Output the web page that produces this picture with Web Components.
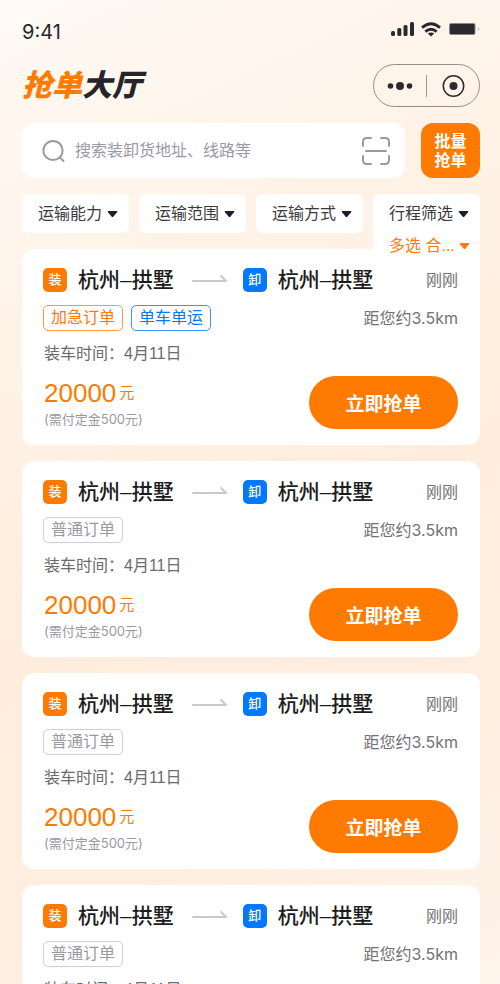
<!DOCTYPE html>
<html lang="zh-CN">
<head>
<meta charset="utf-8">
<meta name="viewport" content="width=device-width, initial-scale=1">
<title>抢单大厅</title>
<style>
  html { min-height: 100%; background: linear-gradient(155deg, #fffaf5 0%, #fff4ea 20%, #feeddd 50%, #feeee0 72%, #fff6ee 100%); }
  body { margin: 0; font-family: "Liberation Sans", "Noto Sans CJK SC", sans-serif; color: #26262a; --wide: Inter, "Noto Sans CJK SC", sans-serif; }
</style>
</head>
<body>
<hall-page></hall-page>

<script>
const define = (name, html, setup) => {
  const template = document.createElement('template');
  template.innerHTML = html;
  customElements.define(name, class extends HTMLElement {
    constructor() {
      super();
      this.attachShadow({ mode: 'open' }).append(template.content.cloneNode(true));
    }
    connectedCallback() { if (setup) setup(this, this.shadowRoot); }
  });
};

define('status-bar', `
  <style>
    :host { display: flex; align-items: center; justify-content: space-between; height: 24px; font-family: var(--wide); font-size: 20px; line-height: 24px; }
    svg { display: block; overflow: visible; }
  </style>
  <time>9:41</time>
  <svg width="90" height="18" viewBox="0 0 90 18" fill="#2a2a2e" aria-label="信号与电量">
    <rect x="1" y="8" width="4" height="5" rx="1.5"/>
    <rect x="7.300" y="5" width="4" height="8" rx="1.5"/>
    <rect x="13.500" y="2" width="4" height="11" rx="1.500"/>
    <rect x="20" y="-1" width="4" height="14" rx="1.500"/>
    <g fill="none" stroke="#2a2a2e" stroke-width="2.800">
      <path d="M32 4.600Q41 -3.200 50 4.600"/>
      <path d="M35.300 8.600Q41 3.800 46.700 8.600"/>
    </g>
    <path d="M37.800 10.600Q41 8.600 44.200 10.600L41 13.500Z"/>
    <rect x="59" y="0" width="26.500" height="12" rx="2" fill="#8f8885"/>
    <rect x="60" y="1" width="24.500" height="10" rx="1"/>
    <path d="M88 4Q90.500 6 88 8Z" fill="#bcb2ac"/>
  </svg>
`);

define('hall-header', `
  <style>
    :host { display: flex; align-items: center; justify-content: space-between; }
    h1 { margin: 0; font-size: 30px; line-height: 42px; font-weight: 900; font-style: italic; color: #26262a; }
    h1 span { color: #ff7a00; }
    .capsule { display: flex; align-items: center; width: 107px; height: 43px; box-sizing: border-box; border: 1px solid #978d88; border-radius: 22px; }
    button { flex: 1; display: grid; place-items: center; height: 100%; padding: 0; border: 0; background: none; }
    i { width: 1px; height: 22px; background: #9f9692; }
    svg { display: block; }
  </style>
  <h1><span>抢单</span>大厅</h1>
  <div class="capsule">
    <button aria-label="更多"><svg width="26" height="10" fill="#2a2a2e"><circle cx="3.500" cy="5" r="2.800"/><circle cx="13" cy="5" r="4"/><circle cx="22.500" cy="5" r="2.800"/></svg></button>
    <i></i>
    <button aria-label="关闭"><svg width="24" height="24"><circle cx="12.500" cy="12" r="10.200" fill="none" stroke="#2a2a2e" stroke-width="1.500"/><circle cx="12.500" cy="12" r="4" fill="#2a2a2e"/></svg></button>
  </div>
`);

define('search-row', `
  <style>
    :host { display: flex; gap: 16px; height: 55px; }
    .box { flex: 1; min-width: 0; display: flex; align-items: center; gap: 10px; padding: 0 14px 0 20px; background: #fff; border-radius: 12px; }
    label { display: flex; }
    input { flex: 1; min-width: 0; padding: 0; border: 0; outline: 0; background: none; font: inherit; font-size: 16px; line-height: 24px; color: #333; }
    input::placeholder { color: #9a9aa4; opacity: 1; }
    .scan { display: grid; padding: 0; border: 0; background: none; }
    .batch { width: 59px; padding: 0 13px; border: 0; border-radius: 12px; background: #ff7a00; color: #fff; font: inherit; font-size: 16px; line-height: 19px; font-weight: 700; }
    svg { display: block; fill: none; stroke: #9a9aa6; stroke-width: 2; stroke-linecap: round; }
  </style>
  <div class="box">
    <label for="q" aria-label="搜索"><svg width="23" height="24"><circle cx="11" cy="11.500" r="9.600"/><path d="M18 18.500L21.500 22"/></svg></label>
    <input id="q" type="text" placeholder="搜索装卸货地址、线路等">
    <button class="scan" aria-label="扫一扫"><svg width="30" height="30"><path d="M2 10V6Q2 2 6 2H10M20 2H24Q28 2 28 6V10M28 20V24Q28 28 24 28H20M10 28H6Q2 28 2 24V20M5 15H25"/></svg></button>
  </div>
  <button class="batch">批量抢单</button>
`);

define('filter-select', `
  <style>
    :host { display: flex; align-items: center; gap: 4px; color: #3a3a3e; }
    select { appearance: none; margin: 0; padding: 0; border: 0; outline: 0; background: none; font: inherit; font-size: 16px; line-height: 24px; color: inherit; }
    svg { display: block; flex: none; fill: var(--caret, #1f1b35); pointer-events: none; }
  </style>
  <select><option></option></select>
  <svg width="11" height="8"><path d="M1.500 1H9.500Q11 1 10 2.300L6.500 6.600Q5.500 7.600 4.500 6.600L1 2.300Q0 1 1.500 1Z"/></svg>
`, (host, root) => {
  root.querySelector('option').textContent = host.getAttribute('text');
  root.querySelector('select').setAttribute('aria-label', host.getAttribute('text'));
});

define('filter-bar', `
  <style>
    :host { display: grid; grid-template-columns: repeat(4, 1fr); gap: 10px; position: relative; z-index: 1; }
    .cell { position: relative; display: flex; align-items: center; height: 39px; padding-left: 16px; background: #fff; border-radius: 6px; }
    .open { border-radius: 6px 6px 0 0; }
    .drop { position: absolute; top: 100%; left: 0; right: 0; display: flex; align-items: center; height: 26px; padding-left: 16px; background: #fff; }
    .drop filter-select { color: #ff7a00; --caret: #ff7a00; }
  </style>
  <div class="cell"><filter-select text="运输能力"></filter-select></div>
  <div class="cell"><filter-select text="运输范围"></filter-select></div>
  <div class="cell"><filter-select text="运输方式"></filter-select></div>
  <div class="cell open"><filter-select text="行程筛选"></filter-select>
    <div class="drop"><filter-select text="多选 合..."></filter-select></div>
  </div>
`);

define('order-tag', `
  <style>
    :host { display: block; box-sizing: border-box; padding: 0 7px; border: 1px solid #cfcfd9; border-radius: 5px; font-size: 16px; line-height: 24px; color: #9a9aa2; }
    :host([kind="urgent"]) { color: #ff7a00; border-color: #ff9a45; }
    :host([kind="single"]) { color: #0a78f5; border-color: #3f92fb; }
  </style>
  <slot></slot>
`);

define('place-name', `
  <style>
    :host { display: flex; align-items: center; gap: 11px; font-size: 21px; line-height: 30px; font-weight: 500; color: #1c1c20; white-space: nowrap; }
    b { width: 24px; height: 24px; border-radius: 5px; background: #ff7a00; color: #fff; font-size: 13px; line-height: 24px; font-weight: 500; text-align: center; }
    :host([kind="卸"]) b { background: #0078ff; }
  </style>
  <b></b><slot></slot>
`, (host, root) => { root.querySelector('b').textContent = host.getAttribute('kind'); });

define('order-card', `
  <style>
    :host { display: block; padding: 16px 22px 16px 21px; background: #fff; border-radius: 12px; }
    .row { display: flex; align-items: center; }
    .gray { margin-left: auto; font-family: var(--wide); font-size: 16px; line-height: 24px; color: #717177; }
    .arrow { flex: none; margin: 0 15px 0 18px; }
    .tags { margin-top: 10px; }
    .tags div { display: flex; gap: 8px; }
    .time { margin-top: 11px; padding-left: 1px; font-size: 16px; line-height: 24px; color: #6a6a70; }
    .foot { justify-content: space-between; margin-top: 10px; padding-left: 1px; }
    .price { display: flex; align-items: center; gap: 3px; color: #ff7a00; font-size: 26px; line-height: 32px; }
    .price small { font-size: 15px; }
    .deposit { font-family: var(--wide); font-size: 13px; line-height: 20px; color: #9999a2; }
    p { margin: 0; }
    button { width: 149px; height: 53px; padding: 0; border: 0; border-radius: 27px; background: #ff7a00; color: #fff; font: inherit; font-size: 19px; font-weight: 700; }
  </style>
  <div class="row">
    <place-name kind="装">杭州–拱墅</place-name>
    <svg class="arrow" width="36" height="12" fill="none" stroke="#c8c8d4" stroke-width="2" stroke-linecap="round" stroke-linejoin="round"><path d="M1 7H34L29 2"/></svg>
    <place-name kind="卸">杭州–拱墅</place-name>
    <span class="gray">刚刚</span>
  </div>
  <div class="row tags"><div><slot></slot></div><span class="gray">距您约3.5km</span></div>
  <p class="time">装车时间：4月11日</p>
  <div class="row foot">
    <div><p class="price">20000<small>元</small></p><p class="deposit">(需付定金500元)</p></div>
    <button>立即抢单</button>
  </div>
`);

define('hall-page', `
  <style>
    :host { display: block; padding: 20px 20px 0 22px; }
    hall-header { margin-top: 20px; }
    search-row { margin-top: 16px; }
    filter-bar { margin-top: 16px; }
    main { display: grid; gap: 16px; margin-top: 16px; }
  </style>
  <status-bar></status-bar>
  <hall-header></hall-header>
  <search-row></search-row>
  <filter-bar></filter-bar>
  <main>
    <order-card><order-tag kind="urgent">加急订单</order-tag><order-tag kind="single">单车单运</order-tag></order-card>
    <order-card><order-tag>普通订单</order-tag></order-card>
    <order-card><order-tag>普通订单</order-tag></order-card>
    <order-card><order-tag>普通订单</order-tag></order-card>
  </main>
`);
</script>
</body>
</html>
